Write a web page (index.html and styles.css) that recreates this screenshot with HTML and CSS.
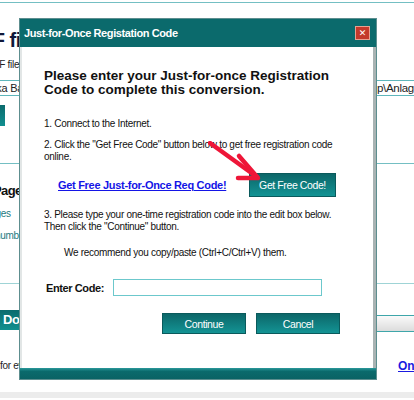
FILE: index.html
```html
<!DOCTYPE html>
<html>
<head>
<meta charset="utf-8">
<link rel="stylesheet" href="styles.css">
</head>
<body>
<div class="page">
  <div class="rule top"></div>
  <h1 class="ptitle">PDF file conversion</h1>
  <div class="psub">PDF file</div>
  <div class="pinput"><span class="in-left">Erika Ba</span><span class="in-right">p\Anlagen\Rechnung.pdf</span></div>
  <div class="pbtn"></div>
  <div class="rule mid"></div>
  <div class="phead">Pages</div>
  <div class="plink one">pages</div>
  <div class="plink two">numbers</div>
  <div class="rule low"></div>
  <div class="prow">
    <div class="dobtn">Download</div>
    <div class="bar"></div>
  </div>
  <div class="foot"><span class="fleft">for everyone</span><a class="online">Online</a></div>
  <div class="bottomstrip"></div>
</div>

<div class="dialog">
  <div class="titlebar">
    <span class="ttext">Just-for-Once Registation Code</span>
    <span class="close">&#x2715;</span>
  </div>
  <div class="dbody">
    <h2 class="dhead">Please enter your Just-for-once Registration<br>Code to complete this conversion.</h2>
    <p class="step s1">1. Connect to the Internet.</p>
    <p class="step s2">2. Click the "Get Free Code" button below to get free registration code online.</p>
    <div class="getrow">
      <a class="getlink">Get Free Just-for-Once Req Code!</a>
      <span class="tbtn getbtn">Get Free Code!</span>
    </div>
    <p class="step s3">3. Please type your one-time registration code into the edit box below.<br>Then click the "Continue" button.</p>
    <p class="step rec">We recommend you copy/paste (Ctrl+C/Ctrl+V) them.</p>
    <div class="coderow">
      <span class="clabel">Enter Code:</span>
      <span class="cinput"></span>
    </div>
    <div class="btnrow">
      <span class="tbtn wide">Continue</span>
      <span class="tbtn wide">Cancel</span>
    </div>
    <svg class="arrow" width="70" height="50" viewBox="0 0 70 50">
      <g stroke="#ee1638" stroke-width="4.5" stroke-linecap="round" stroke-linejoin="round" fill="none">
        <path d="M2 2 L49 36"/>
        <path d="M31 15 L50 37 L30 37"/>
      </g>
    </svg>
  </div>
  <div class="dfoot"></div>
</div>
</body>
</html>
```
FILE: styles.css
```css
html, body {
  margin: 0;
  padding: 0;
}
body {
  width: 414px;
  height: 400px;
  overflow: hidden;
  position: relative;
  background: #fff;
  font-family: "Liberation Sans", Arial, sans-serif;
}
.page {
  width: 460px;
  display: flex;
  flex-direction: column;
}
.rule {
  height: 1px;
  background: #74bfc3;
}
.rule.top { margin-top: 2px; }
.ptitle {
  margin: 25px 0 0 -34px;
  font-size: 20px;
  line-height: 24px;
  font-weight: bold;
  letter-spacing: -0.5px;
  color: #10183a;
  white-space: nowrap;
}
.psub {
  margin: 7px 0 0 -14px;
  font-size: 10px;
  letter-spacing: -0.3px;
  line-height: 12px;
  color: #222;
  white-space: nowrap;
}
.pinput {
  margin: 9px 0 0 -10px;
  height: 14px;
  border: 1px solid #5fb6bb;
  display: flex;
  font-size: 11px;
  letter-spacing: -0.3px;
  line-height: 14px;
  color: #222;
  white-space: nowrap;
  overflow: hidden;
}
.in-left { width: 32px; flex: none; text-align: right; overflow: hidden; direction: rtl; }
.in-right { margin-left: 354px; direction: ltr; font-size: 11.5px; }
.pbtn {
  margin: 9px 0 0 -60px;
  width: 65px;
  height: 21px;
  background: linear-gradient(#0b6b6d, #118f90);
}
.rule.mid { margin-top: 37px; }
.phead {
  margin: 19px 0 0 -7px;
  font-size: 13px;
  letter-spacing: -0.6px;
  line-height: 16px;
  font-weight: bold;
  color: #111;
}
.plink {
  font-size: 10px;
  letter-spacing: -0.3px;
  line-height: 12px;
  color: #1c7a80;
  white-space: nowrap;
}
.plink.one { margin: 9px 0 0 -15px; }
.plink.two { margin: 10px 0 0 -5px; }
.rule.low { margin-top: 41px; background: #9fd4d6; }
.prow {
  margin-top: 26px;
  display: flex;
  align-items: flex-start;
}
.dobtn {
  margin-left: -10px;
  width: 120px;
  height: 20px;
  padding-left: 13px;
  box-sizing: border-box;
  background: linear-gradient(#0b6b6d, #11908f);
  color: #fff;
  font-weight: bold;
  font-size: 13px;
  letter-spacing: -0.3px;
  line-height: 20px;
}
.bar {
  flex: 1;
  margin-top: 5px;
  height: 15px;
  border-top: 1px solid #3ea6aa;
  border-bottom: 1px solid #3ea6aa;
  background: linear-gradient(#fafafa, #dcdcdc);
}
.foot {
  margin-top: 28px;
  display: flex;
  font-size: 10px;
  letter-spacing: -0.3px;
  line-height: 12px;
  white-space: nowrap;
}
.fleft { width: 398px; flex: none; color: #222; }
.online {
  font-weight: bold;
  font-size: 12px;
  letter-spacing: 0;
  color: #1a1ae0;
  text-decoration: underline;
}
.bottomstrip {
  margin-top: 20px;
  height: 6px;
  background: #ececec;
}

/* dialog overlay */
.dialog {
  position: absolute;
  left: 19px;
  top: 18px;
  width: 358px;
  height: 362px;
  box-sizing: border-box;
  border: 1px solid #5d8e8f;
  background: #fff;
  display: flex;
  flex-direction: column;
}
.titlebar {
  height: 28px;
  flex: none;
  background: #0b6a6c;
  display: flex;
  align-items: center;
  justify-content: space-between;
  padding: 0 6px 0 4px;
}
.ttext {
  color: #fff;
  font-weight: bold;
  font-size: 11px;
  letter-spacing: -0.4px;
}
.close {
  width: 15px;
  height: 14px;
  box-sizing: border-box;
  border: 1px solid #e8a090;
  background: #c4392b;
  color: #fff;
  font-family: "DejaVu Sans", sans-serif;
  font-weight: bold;
  font-size: 9px;
  line-height: 12px;
  text-align: center;
}
.dbody {
  flex: 1;
  position: relative;
  border-left: 2px solid #e2e6e6;
  border-right: 3px solid #a9b3b3;
  padding: 22px 0 0 22px;
  color: #111;
}
.dhead {
  margin: 0;
  font-size: 13.5px;
  line-height: 14px;
  font-weight: bold;
  letter-spacing: 0;
  white-space: nowrap;
}
.step {
  margin: 0;
  font-size: 10px;
  letter-spacing: -0.3px;
  line-height: 12px;
  width: 300px;
}
.s1 { margin-top: 21px; }
.s2 { margin-top: 9px; }
.s3 { margin-top: 12px; white-space: nowrap; }
.rec { margin-top: 14px; padding-left: 20px; }
.getrow {
  margin-top: 10px;
  display: grid;
  grid-template-columns: 191px 87px;
  align-items: center;
  padding-left: 14px;
}
.getlink {
  font-weight: bold;
  font-size: 11px;
  letter-spacing: -0.3px;
  color: #1414e6;
  text-decoration: underline;
}
.tbtn {
  display: flex;
  align-items: center;
  justify-content: center;
  box-sizing: border-box;
  border: 1px solid #0a5a5c;
  background: linear-gradient(#0c6769, #139394);
  color: #fff;
  font-size: 10.5px;
  letter-spacing: -0.4px;
}
.getbtn { height: 24px; }
.coderow {
  margin-top: 20px;
  display: grid;
  grid-template-columns: 67px 209px;
  align-items: center;
  padding-left: 2px;
}
.clabel {
  font-weight: bold;
  font-size: 11px;
  letter-spacing: -0.4px;
}
.cinput {
  height: 17px;
  box-sizing: border-box;
  border: 1px solid #6cc8cc;
}
.btnrow {
  margin-top: 17px;
  display: flex;
  gap: 10px;
  padding-left: 118px;
}
.wide { width: 84px; height: 21px; }
.arrow {
  position: absolute;
  left: 186px;
  top: 94px;
}
.dfoot {
  height: 11px;
  flex: none;
  background: linear-gradient(#2a9a9c, #0b6a6c 30%, #0a6264);
}
```
